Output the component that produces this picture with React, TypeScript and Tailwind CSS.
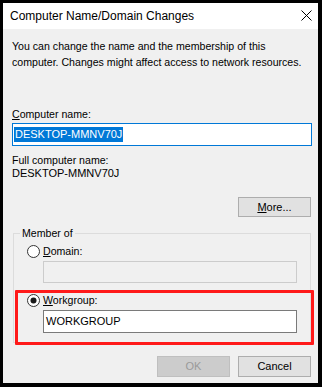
import React from "react";

function Radio({ checked }: { checked?: boolean }) {
  return (
    <svg width="13" height="13" viewBox="0 0 13 13" className="shrink-0">
      <circle cx="6.5" cy="6.5" r="6" fill="#ffffff" stroke="#333333" strokeWidth="1" />
      {checked && <circle cx="6.5" cy="6.5" r="3" fill="#1a1a1a" />}
    </svg>
  );
}

export default function App() {
  return (
    <div className="w-[322px] h-[387px] bg-black pt-[3px] pl-[3px] pr-[4px] pb-[4px] font-['Liberation_Sans',Arial,sans-serif] text-black">
      <div className="flex flex-col h-full">
        {/* Title bar */}
        <div className="h-[26px] bg-white flex items-center justify-between pl-[7px] pr-[6px] shrink-0">
          <span className="text-[12px] leading-[14px] text-black whitespace-nowrap">Computer Name/Domain Changes</span>
          <svg width="11" height="11" viewBox="0 0 11 11" className="mb-[1px]">
            <path d="M0.5 0.5 L10.5 10.5 M10.5 0.5 L0.5 10.5" stroke="#000" strokeWidth="1" fill="none" />
          </svg>
        </div>

        {/* Body */}
        <div className="flex-1 bg-[#f0f0f0] pt-[9px] pl-[9px] pr-[6px] flex flex-col text-[10.6px] whitespace-nowrap">
          <p className="leading-[16px]">
            You can change the name and the membership of this
            <br />
            computer. Changes might affect access to network resources.
          </p>

          <div className="mt-[38px] leading-[13px]">
            <span className="underline underline-offset-[1px]">C</span>omputer name:
          </div>
          <div className="mt-[2px] h-[23px] border border-[#0078d7] bg-white flex items-center pl-[1px]">
            <span className="bg-[#0078d7] text-white text-[11px] leading-[15px] px-[1px]">DESKTOP-MMNV70J</span>
          </div>

          <div className="mt-[8px] leading-[13px]">Full computer name:</div>
          <div className="leading-[13px] text-[11px]">DESKTOP-MMNV70J</div>

          <div className="flex justify-end mt-[17px] mr-[1px]">
            <button className="w-[73px] h-[20px] bg-[#e1e1e1] border border-[#adadad] text-[11px] leading-[13px] flex items-center justify-center">
              <span>
                <span className="underline underline-offset-[1px]">M</span>ore...
              </span>
            </button>
          </div>

          {/* Group box */}
          <div className="relative mt-[16px] mx-[1px] border border-[#dcdcdc] pt-[11px] pl-[13px] pb-[9px]">
            <div className="absolute left-[6px] top-[-7px] bg-[#f0f0f0] px-[2px] leading-[13px]">Member of</div>

            <div className="flex items-center gap-[3px] h-[13px]">
              <Radio />
              <span className="leading-[13px]">
                <span className="underline underline-offset-[1px]">D</span>omain:
              </span>
            </div>
            <div className="ml-[16px] mt-[3px] w-[254px] h-[22px] border border-[#cccccc] bg-[#f0f0f0]" />

            <div className="flex items-center gap-[3px] h-[13px] mt-[11px]">
              <Radio checked />
              <span className="leading-[13px]">
                <span className="underline underline-offset-[1px]">W</span>orkgroup:
              </span>
            </div>
            <div className="ml-[16px] mt-[3px] w-[254px] h-[23px] border border-[#7a7a7a] bg-white flex items-center pl-[2px]">
              <span className="text-[11px] leading-[13px]">WORKGROUP</span>
            </div>

            {/* red annotation */}
            <div className="absolute left-[1px] top-[56px] w-[299px] h-[55px] border-[3px] border-[#ff1a1a] rounded-[1px] pointer-events-none" />
          </div>

          <div className="flex justify-end gap-[8px] mt-[13px] mr-[1px]">
            <button className="w-[73px] h-[21px] bg-[#cccccc] border border-[#bfbfbf] text-[11px] text-[#9a9a9a] flex items-center justify-center">
              OK
            </button>
            <button className="w-[73px] h-[21px] bg-[#e1e1e1] border border-[#adadad] text-[11px] flex items-center justify-center">
              Cancel
            </button>
          </div>
        </div>
      </div>
    </div>
  );
}
